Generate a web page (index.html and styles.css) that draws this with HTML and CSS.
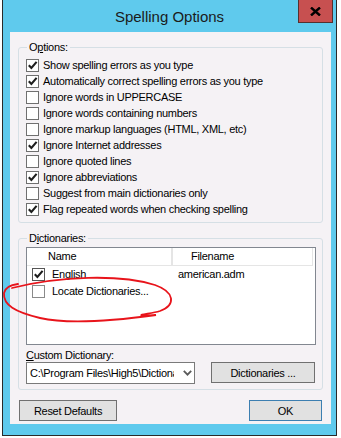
FILE: index.html
```html
<!DOCTYPE html>
<html>
<head>
<meta charset="utf-8">
<link rel="stylesheet" href="styles.css">
</head>
<body>
<div class="window">
  <div class="titlebar">
    <span></span>
    <span class="title">Spelling Options</span>
    <div class="close"><svg width="11" height="9" viewBox="0 0 11 9"><path d="M1 0.5 L10 8.5 M10 0.5 L1 8.5" stroke="#000" stroke-width="2.4" fill="none"/></svg></div>
  </div>
  <div class="client">
    <div class="group">
      <div class="legend">O<u>p</u>tions:</div>
      <ul class="checks">
        <li class="check"><span class="box"><svg width="11" height="11" viewBox="0 0 11 11"><polyline points="1.8,5.2 4.4,8 9.6,1.8" fill="none" stroke="#1e1e1e" stroke-width="2.1"/></svg></span><span>Show spelling errors as you type</span></li>
        <li class="check"><span class="box"><svg width="11" height="11" viewBox="0 0 11 11"><polyline points="1.8,5.2 4.4,8 9.6,1.8" fill="none" stroke="#1e1e1e" stroke-width="2.1"/></svg></span><span>Automatically correct spelling errors as you type</span></li>
        <li class="check"><span class="box"></span><span>Ignore words in UPPERCASE</span></li>
        <li class="check"><span class="box"></span><span>Ignore words containing numbers</span></li>
        <li class="check"><span class="box"></span><span>Ignore markup languages (HTML, XML, etc)</span></li>
        <li class="check"><span class="box"><svg width="11" height="11" viewBox="0 0 11 11"><polyline points="1.8,5.2 4.4,8 9.6,1.8" fill="none" stroke="#1e1e1e" stroke-width="2.1"/></svg></span><span>Ignore Internet addresses</span></li>
        <li class="check"><span class="box"></span><span>Ignore quoted lines</span></li>
        <li class="check"><span class="box"><svg width="11" height="11" viewBox="0 0 11 11"><polyline points="1.8,5.2 4.4,8 9.6,1.8" fill="none" stroke="#1e1e1e" stroke-width="2.1"/></svg></span><span>Ignore abbreviations</span></li>
        <li class="check"><span class="box"></span><span>Suggest from main dictionaries only</span></li>
        <li class="check"><span class="box"><svg width="11" height="11" viewBox="0 0 11 11"><polyline points="1.8,5.2 4.4,8 9.6,1.8" fill="none" stroke="#1e1e1e" stroke-width="2.1"/></svg></span><span>Flag repeated words when checking spelling</span></li>
      </ul>
    </div>
    <div class="group dicts">
      <div class="legend">D<u>i</u>ctionaries:</div>
      <div class="listview">
        <div class="lv-head">
          <div class="hcell c1">Name</div>
          <div class="hcell c2">Filename</div>
        </div>
        <div class="lv-row">
          <div class="cell c1"><span class="box lv-box"><svg width="11" height="11" viewBox="0 0 11 11"><polyline points="1.8,5.2 4.4,8 9.6,1.8" fill="none" stroke="#1e1e1e" stroke-width="2.1"/></svg></span>English</div>
          <div class="cell c2">american.adm</div>
        </div>
        <div class="lv-row">
          <div class="cell c1"><span class="box lv-box light"></span>Locate Dictionaries...</div>
          <div class="cell c2"></div>
        </div>
      </div>
      <div class="cd-label"><u>C</u>ustom Dictionary:</div>
      <div class="cd-row">
        <div class="combo">
          <span class="combo-text">C:\Program Files\High5\Dictionaries\</span>
          <svg class="chev" width="9" height="6" viewBox="0 0 9 6"><polyline points="0.8,0.8 4.5,4.6 8.2,0.8" fill="none" stroke="#5a5a5a" stroke-width="1.8"/></svg>
        </div>
        <button class="btn dict-btn">Dictionaries ...</button>
      </div>
    </div>
    <div class="buttons">
      <button class="btn reset">Reset Defaults</button>
      <button class="btn ok">OK</button>
    </div>
  </div>
</div>
<svg class="scribble" width="341" height="438" viewBox="0 0 341 438">
  <path d="M12 288 C 60 276, 120 274, 155 285 C 175 292, 176 305, 160 311 C 150 314, 138 314, 142 316 L 156 315 C 120 320, 70 325, 40 318 C 15 312, 3 305, 4 293 C 5 288, 10 285, 18 284" fill="none" stroke="#e8141b" stroke-width="1.8" stroke-linecap="round"/>
</svg>
</body>
</html>
```

FILE: styles.css
```css
* { box-sizing: border-box; }

body {
  margin: 0;
  width: 341px;
  height: 438px;
  position: relative;
  overflow: hidden;
  background: #ffffff;
  font-family: "Liberation Sans", Arial, sans-serif;
  font-size: 11px;
  letter-spacing: -0.28px;
  color: #000;
}

.window {
  margin-left: 2px;
  width: 335px;
  border: 1px solid #2a2a2a;
  border-top: 0;
  background: #5fcaed;
}

.titlebar {
  height: 32px;
  display: grid;
  grid-template-columns: 1fr auto 1fr;
  align-items: center;
}

.title {
  grid-column: 2;
  font-size: 15px;
  letter-spacing: 0;
  color: #1b1b1b;
}

.close {
  grid-column: 3;
  justify-self: end;
  align-self: start;
  margin-right: 3px;
  width: 35px;
  height: 23px;
  background: #c75050;
  border: 1px solid #55302f;
  border-top: 0;
  display: flex;
  align-items: center;
  justify-content: center;
}

.client {
  margin: 0 5px 11px 7px;
  height: 392px;
  background: #f5f2f5;
  padding: 15px 8px 0;
}

.group {
  border: 1px solid #d5dfe5;
  border-radius: 3px;
  padding: 0 7px 5px;
}

.legend {
  width: fit-content;
  margin: -7px 0 0 1px;
  padding: 0 2px;
  line-height: 13px;
  background: #f5f2f5;
}

.checks {
  list-style: none;
  margin: 3px 0 0;
  padding: 0;
}

.check {
  display: flex;
  height: 16px;
  line-height: 16px;
  white-space: nowrap;
}

.box {
  flex: none;
  width: 13px;
  height: 13px;
  margin: 2px 4px 0 0;
  border: 1px solid #707070;
  background: #fff;
  display: flex;
}

.dicts {
  margin-top: 15px;
}

.listview {
  margin-top: 2px;
  width: 290px;
  height: 98px;
  border: 1px solid #828790;
  background: #fff;
}

.lv-head {
  display: flex;
  height: 18px;
}

.hcell {
  height: 18px;
  line-height: 17px;
  border-bottom: 1px solid #e5e5e5;
}

.hcell.c1 {
  width: 146px;
  padding-left: 21px;
  border-right: 2px solid #e5e5e5;
}

.hcell.c2 {
  width: 140px;
  padding-left: 18px;
  border-right: 1px solid #e5e5e5;
}

.lv-row {
  display: flex;
  height: 17px;
  line-height: 17px;
}

.cell.c1 {
  width: 146px;
  padding-left: 5px;
  display: flex;
}

.cell.c2 {
  padding-left: 5px;
}

.lv-box {
  margin: 2px 7px 0 0;
  border-color: #555;
}

.lv-box.light {
  border-color: #8a8a8a;
}

.cd-label {
  margin-top: 4px;
  line-height: 13px;
}

.cd-row {
  display: flex;
  justify-content: space-between;
  align-items: flex-start;
}

.combo {
  width: 169px;
  height: 22px;
  border: 1px solid #7a7a7a;
  background: #fff;
  display: flex;
  align-items: center;
}

.combo-text {
  width: 147px;
  padding-left: 3px;
  overflow: hidden;
  white-space: nowrap;
}

.chev {
  margin-left: auto;
  margin-right: 2px;
}

.btn {
  font: inherit;
  letter-spacing: -0.28px;
  color: #000;
  height: 21px;
  padding: 0;
  background: #e1e1e1;
  border: 1px solid #707070;
}

.dict-btn {
  width: 104px;
}

.buttons {
  margin-top: 10px;
  display: flex;
  justify-content: space-between;
  padding: 0 1px;
}

.reset {
  width: 98px;
}

.ok {
  width: 73px;
  border-color: #3c7fb1;
}

.scribble {
  position: absolute;
  left: 0;
  top: 0;
  pointer-events: none;
}
```
